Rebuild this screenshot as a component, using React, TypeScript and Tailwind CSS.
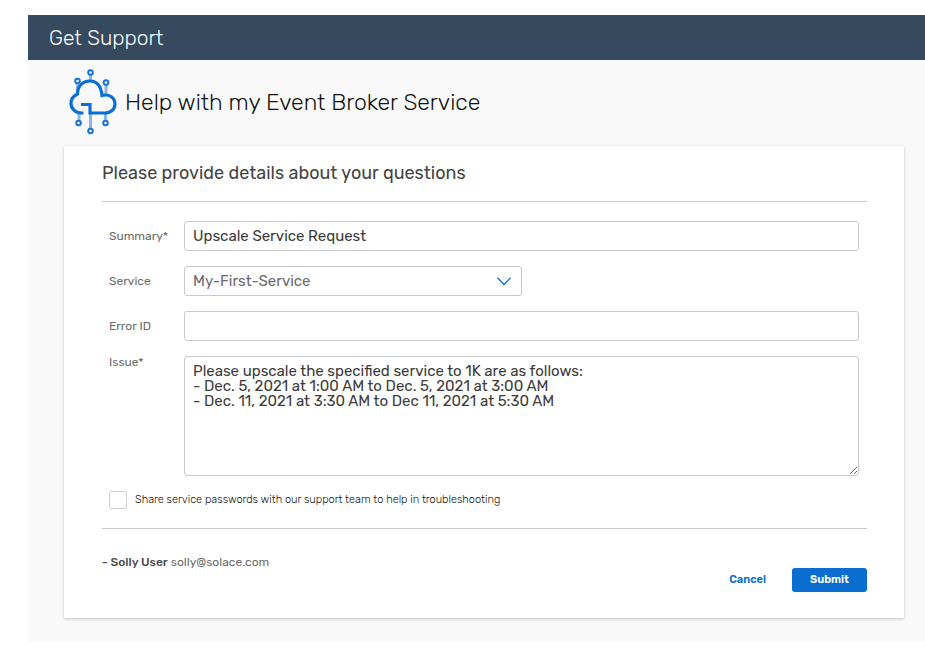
import React from "react";

function EventBrokerIcon() {
  return (
    <svg width="48" height="66" viewBox="0 0 48 66" fill="none" aria-hidden="true">
      <g stroke="#86b7e8" strokeWidth="3">
        <path d="M21.500 6v6M8.500 14v11M37 15v12M21.500 45v15M10 45v7M36.500 45v7" />
      </g>
      <path
        d="M14.500 44H12C6.500 44 2 39.500 2 34.500C2 30 5 26.500 8.500 25C8.500 17 14 12 20.500 12C27 12 32 16 33 26.500C40.500 24.500 46 29 46 35C46 40.500 41.500 44 36.500 44H21V35.500H12"
        stroke="#0a6ed3"
        strokeWidth="3.2"
      />
      <g stroke="#1273d4" strokeWidth="1.900" fill="#fafafa">
        <circle cx="21.500" cy="3.500" r="2.300" />
        <circle cx="8.500" cy="12" r="2.300" />
        <circle cx="37" cy="13.500" r="2.300" />
        <circle cx="9.500" cy="54" r="2.300" />
        <circle cx="36.500" cy="54" r="2.300" />
        <circle cx="21.500" cy="62" r="2.300" />
      </g>
    </svg>
  );
}

const labelClass = "w-[75px] shrink-0 text-[12px] leading-3 text-[#6b6b6b]";
const fieldClass =
  "block rounded-[3px] border border-[#c8c9ca] bg-white px-2 text-[15px] outline-none";

export default function App() {
  return (
    <main className="bg-white pt-[15px] pl-7 font-['Rubik',Roboto,sans-serif]">
      <header className="flex h-[45px] items-center bg-[#354a5f] px-[21px]">
        <h1 className="text-[21px] leading-7 font-light text-white">Get Support</h1>
      </header>
      <section className="bg-[#f9f9f9] pr-[21px] pb-[23px] pl-9">
        <div className="flex h-[86px] items-center gap-2 pb-[2px] pl-[5px]">
          <EventBrokerIcon />
          <h2 className="text-[23px] leading-8 font-light text-[#111]">
            Help with my Event Broker Service
          </h2>
        </div>
        <form
          className="bg-white pt-[13px] pr-[37px] pb-[26px] pl-[38px] shadow-[0_1px_3px_#00000038]"
          onSubmit={(e) => e.preventDefault()}
        >
          <h3 className="text-[18px] leading-7 font-normal text-[#444]">
            Please provide details about your questions
          </h3>
          <div className="mt-[14px] border-y border-[#c8c9ca] pt-[19px] pr-2 pb-[19px] pl-[7px]">
            <div className="flex flex-col gap-[15px]">
              <div className="flex items-center">
                <label htmlFor="summary" className={labelClass}>Summary*</label>
                <input
                  id="summary"
                  defaultValue="Upscale Service Request"
                  className={`${fieldClass} h-[30px] min-w-0 flex-1 text-[#3c3c3c]`}
                />
              </div>
              <div className="flex items-center">
                <label htmlFor="service" className={labelClass}>Service</label>
                <div className="relative w-1/2 max-w-[338px]">
                  <select
                    id="service"
                    className={`${fieldClass} h-[30px] w-full appearance-none text-[#6b6b6b]`}
                  >
                    <option>My-First-Service</option>
                  </select>
                  <svg
                    className="pointer-events-none absolute top-[11px] right-[10px]"
                    width="15"
                    height="9"
                    viewBox="0 0 15 9"
                    fill="none"
                    aria-hidden="true"
                  >
                    <path d="M0.500 0.800L7 7.500L13.500 0.800" stroke="#0a6ed1" strokeWidth="1.300" />
                  </svg>
                </div>
              </div>
              <div className="flex items-center">
                <label htmlFor="error-id" className={labelClass}>Error ID</label>
                <input id="error-id" className={`${fieldClass} h-[30px] min-w-0 flex-1 text-[#3c3c3c]`} />
              </div>
              <div className="flex items-start">
                <label htmlFor="issue" className={labelClass}>Issue*</label>
                <textarea
                  id="issue"
                  className={`${fieldClass} h-[120px] min-w-0 flex-1 resize py-[7px] leading-[15px] text-[#3c3c3c]`}
                  defaultValue={
                    "Please upscale the specified service to 1K are as follows:\n- Dec. 5, 2021 at 1:00 AM to Dec. 5, 2021 at 3:00 AM\n- Dec. 11, 2021 at 3:30 AM to Dec 11, 2021 at 5:30 AM"
                  }
                />
              </div>
              <label className="flex items-center gap-2 text-[11px] leading-[18px] font-light text-[#111]">
                <input
                  type="checkbox"
                  className="size-[18px] appearance-none rounded-[2px] border border-[#d0d0d0] bg-white checked:bg-[#0a6ed1]"
                />
                Share service passwords with our support team to help in troubleshooting
              </label>
            </div>
          </div>
          <p className="mt-[27px] text-[12px] leading-3 text-[#6b6b6b]">
            <span className="font-medium text-[#4c4c4c]">- Solly User</span> solly@solace.com
          </p>
          <div className="flex justify-end gap-2 text-[11px] leading-4 font-semibold">
            <button type="button" className="h-6 px-[18px] text-[#0a6ed1]">
              Cancel
            </button>
            <button type="submit" className="h-6 w-[75px] rounded-[3px] bg-[#0a6ed1] text-white">
              Submit
            </button>
          </div>
        </form>
      </section>
    </main>
  );
}
